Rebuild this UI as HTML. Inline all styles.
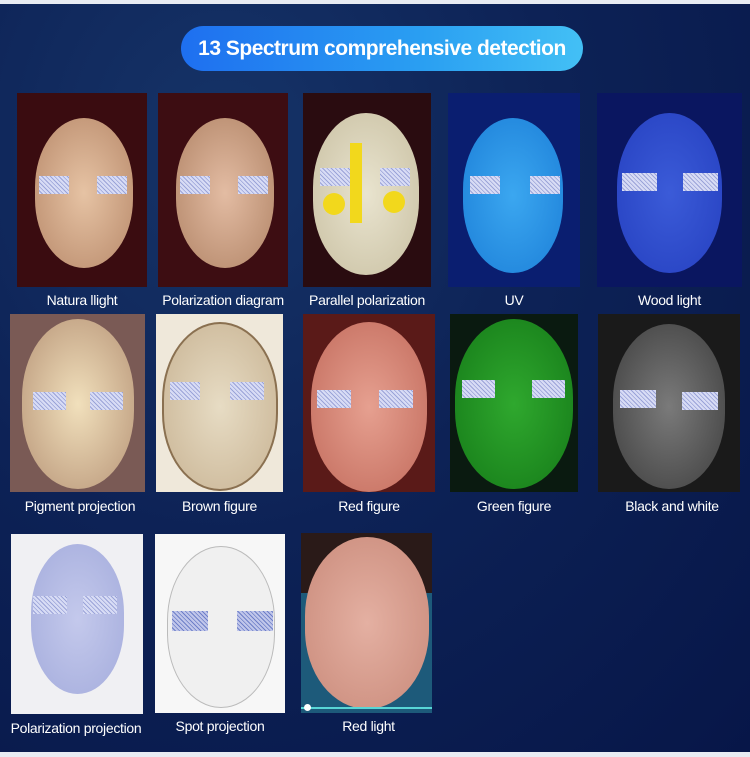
<!DOCTYPE html><html><head><style>
body{margin:0;width:750px;height:757px;overflow:hidden;background:#0b1c4d;font-family:"Liberation Sans",sans-serif;position:relative}
.bg{position:absolute;inset:0;background:radial-gradient(ellipse at 30% 20%,#163468 0%,#0d2256 45%,#071648 100%)}
.t{position:absolute;overflow:hidden}
.f{position:absolute;border-radius:50%/46%}
.e{position:absolute;width:30px;height:18px;background:repeating-linear-gradient(45deg,#d8dcf5 0 2px,#9aa3d8 2px 3px)}
.l{position:absolute;color:#fff;font-size:14px;text-align:center;white-space:nowrap;letter-spacing:-0.3px}
</style></head><body><div class="bg"></div>
<div style="position:absolute;left:0;top:0;width:750px;height:4px;background:#e8ecf3"></div>
<div style="position:absolute;left:0;top:752px;width:750px;height:5px;background:#e8ecf3"></div>
<div style="position:absolute;left:181px;top:26px;width:402px;height:45px;border-radius:23px;background:linear-gradient(90deg,#1e6ff0,#2a9ff2 60%,#43c0f5);color:#fff;font-weight:bold;font-size:21px;line-height:45px;text-align:center;letter-spacing:-0.5px">13 Spectrum comprehensive detection</div>

<!-- row1 -->
<div class="t" style="left:17px;top:93px;width:130px;height:194px;background:#3a0c10"><div class="f" style="left:18px;top:25px;width:98px;height:150px;background:radial-gradient(#e6c3a4,#b8896a)"></div><div class="e" style="left:22px;top:83px"></div><div class="e" style="left:80px;top:83px"></div></div>
<div class="t" style="left:158px;top:93px;width:130px;height:194px;background:#3d0d12"><div class="f" style="left:18px;top:25px;width:98px;height:150px;background:radial-gradient(#e3bca3,#b18466)"></div><div class="e" style="left:22px;top:83px"></div><div class="e" style="left:80px;top:83px"></div></div>
<div class="t" style="left:303px;top:93px;width:128px;height:194px;background:#2a0c10"><div class="f" style="left:10px;top:20px;width:106px;height:162px;background:radial-gradient(#e9e4cf,#c9c0a2)"></div><div style="position:absolute;left:47px;top:50px;width:12px;height:80px;background:#f2d81c"></div><div style="position:absolute;left:20px;top:100px;width:22px;height:22px;border-radius:50%;background:#f2d81c"></div><div style="position:absolute;left:80px;top:98px;width:22px;height:22px;border-radius:50%;background:#f2d81c"></div><div class="e" style="left:17px;top:75px"></div><div class="e" style="left:77px;top:75px"></div></div>
<div class="t" style="left:448px;top:93px;width:132px;height:194px;background:#0a1e70"><div class="f" style="left:15px;top:25px;width:100px;height:155px;background:radial-gradient(#3ba7f0,#1c7fd8)"></div><div class="e" style="left:22px;top:83px"></div><div class="e" style="left:82px;top:83px"></div></div>
<div class="t" style="left:597px;top:93px;width:145px;height:194px;background:#0a1660"><div class="f" style="left:20px;top:20px;width:105px;height:160px;background:radial-gradient(#3b5bd8,#2540c0)"></div><div class="e" style="left:25px;top:80px;width:35px"></div><div class="e" style="left:86px;top:80px;width:35px"></div></div>
<div class="l" style="left:17px;top:292px;width:130px">Natura llight</div>
<div class="l" style="left:148px;top:292px;width:150px">Polarization diagram</div>
<div class="l" style="left:298px;top:292px;width:138px">Parallel polarization</div>
<div class="l" style="left:448px;top:292px;width:132px">UV</div>
<div class="l" style="left:597px;top:292px;width:145px">Wood light</div>

<!-- row2 -->
<div class="t" style="left:10px;top:314px;width:135px;height:178px;background:#7a5a55"><div class="f" style="left:12px;top:5px;width:112px;height:170px;background:radial-gradient(#f1e0bc,#b79477)"></div><div class="e" style="left:23px;top:78px;width:33px"></div><div class="e" style="left:80px;top:78px;width:33px"></div></div>
<div class="t" style="left:156px;top:314px;width:127px;height:178px;background:#efe8da"><div class="f" style="left:6px;top:8px;width:112px;height:165px;background:radial-gradient(#e7dcc4,#c8b393);border:2px solid #8a7050"></div><div class="e" style="left:14px;top:68px;width:30px"></div><div class="e" style="left:74px;top:68px;width:34px"></div></div>
<div class="t" style="left:303px;top:314px;width:132px;height:178px;background:#5a1a18"><div class="f" style="left:8px;top:8px;width:116px;height:170px;background:radial-gradient(#e6a090,#c26b5c)"></div><div class="e" style="left:14px;top:76px;width:34px"></div><div class="e" style="left:76px;top:76px;width:34px"></div></div>
<div class="t" style="left:450px;top:314px;width:128px;height:178px;background:#0a1a10"><div class="f" style="left:5px;top:5px;width:118px;height:170px;background:radial-gradient(#2fa82e,#157a18)"></div><div class="e" style="left:12px;top:66px;width:33px"></div><div class="e" style="left:82px;top:66px;width:33px"></div></div>
<div class="t" style="left:598px;top:314px;width:142px;height:178px;background:#1a1a1a"><div class="f" style="left:15px;top:10px;width:112px;height:165px;background:radial-gradient(#7a7a7a,#3e3e3e)"></div><div class="e" style="left:22px;top:76px;width:36px"></div><div class="e" style="left:84px;top:78px;width:36px"></div></div>
<div class="l" style="left:5px;top:498px;width:150px">Pigment projection</div>
<div class="l" style="left:156px;top:498px;width:127px">Brown figure</div>
<div class="l" style="left:303px;top:498px;width:132px">Red figure</div>
<div class="l" style="left:450px;top:498px;width:128px">Green figure</div>
<div class="l" style="left:598px;top:498px;width:148px">Black and white</div>

<!-- row3 -->
<div class="t" style="left:11px;top:534px;width:132px;height:180px;background:#f0f0f3"><div class="f" style="left:20px;top:10px;width:93px;height:150px;background:radial-gradient(#c4c9ec,#a4acdc)"></div><div class="e" style="left:22px;top:62px;width:34px"></div><div class="e" style="left:72px;top:62px;width:34px"></div></div>
<div class="t" style="left:155px;top:534px;width:130px;height:179px;background:#f7f7f7"><div class="f" style="left:12px;top:12px;width:106px;height:160px;background:#f0f0f0;border:1px solid #bbb"></div><div class="e" style="left:17px;top:77px;width:36px;height:20px;background:repeating-linear-gradient(45deg,#c0c6ea 0 2px,#6e7fc8 2px 3px)"></div><div class="e" style="left:82px;top:77px;width:36px;height:20px;background:repeating-linear-gradient(45deg,#c0c6ea 0 2px,#6e7fc8 2px 3px)"></div></div>
<div class="t" style="left:301px;top:533px;width:131px;height:180px;background:#1d5a7a"><div style="position:absolute;left:0;top:0;width:131px;height:60px;background:#2a1a18"></div><div class="f" style="left:4px;top:4px;width:124px;height:172px;background:radial-gradient(#e4b0a2,#c98a7a)"></div><div style="position:absolute;left:0;top:174px;width:131px;height:2px;background:#58d6d6"></div><div style="position:absolute;left:3px;top:171px;width:7px;height:7px;border-radius:50%;background:#fff"></div></div>
<div class="l" style="left:0px;top:720px;width:152px">Polarization projection</div>
<div class="l" style="left:155px;top:718px;width:130px">Spot projection</div>
<div class="l" style="left:301px;top:718px;width:135px">Red light</div>
</body></html>
